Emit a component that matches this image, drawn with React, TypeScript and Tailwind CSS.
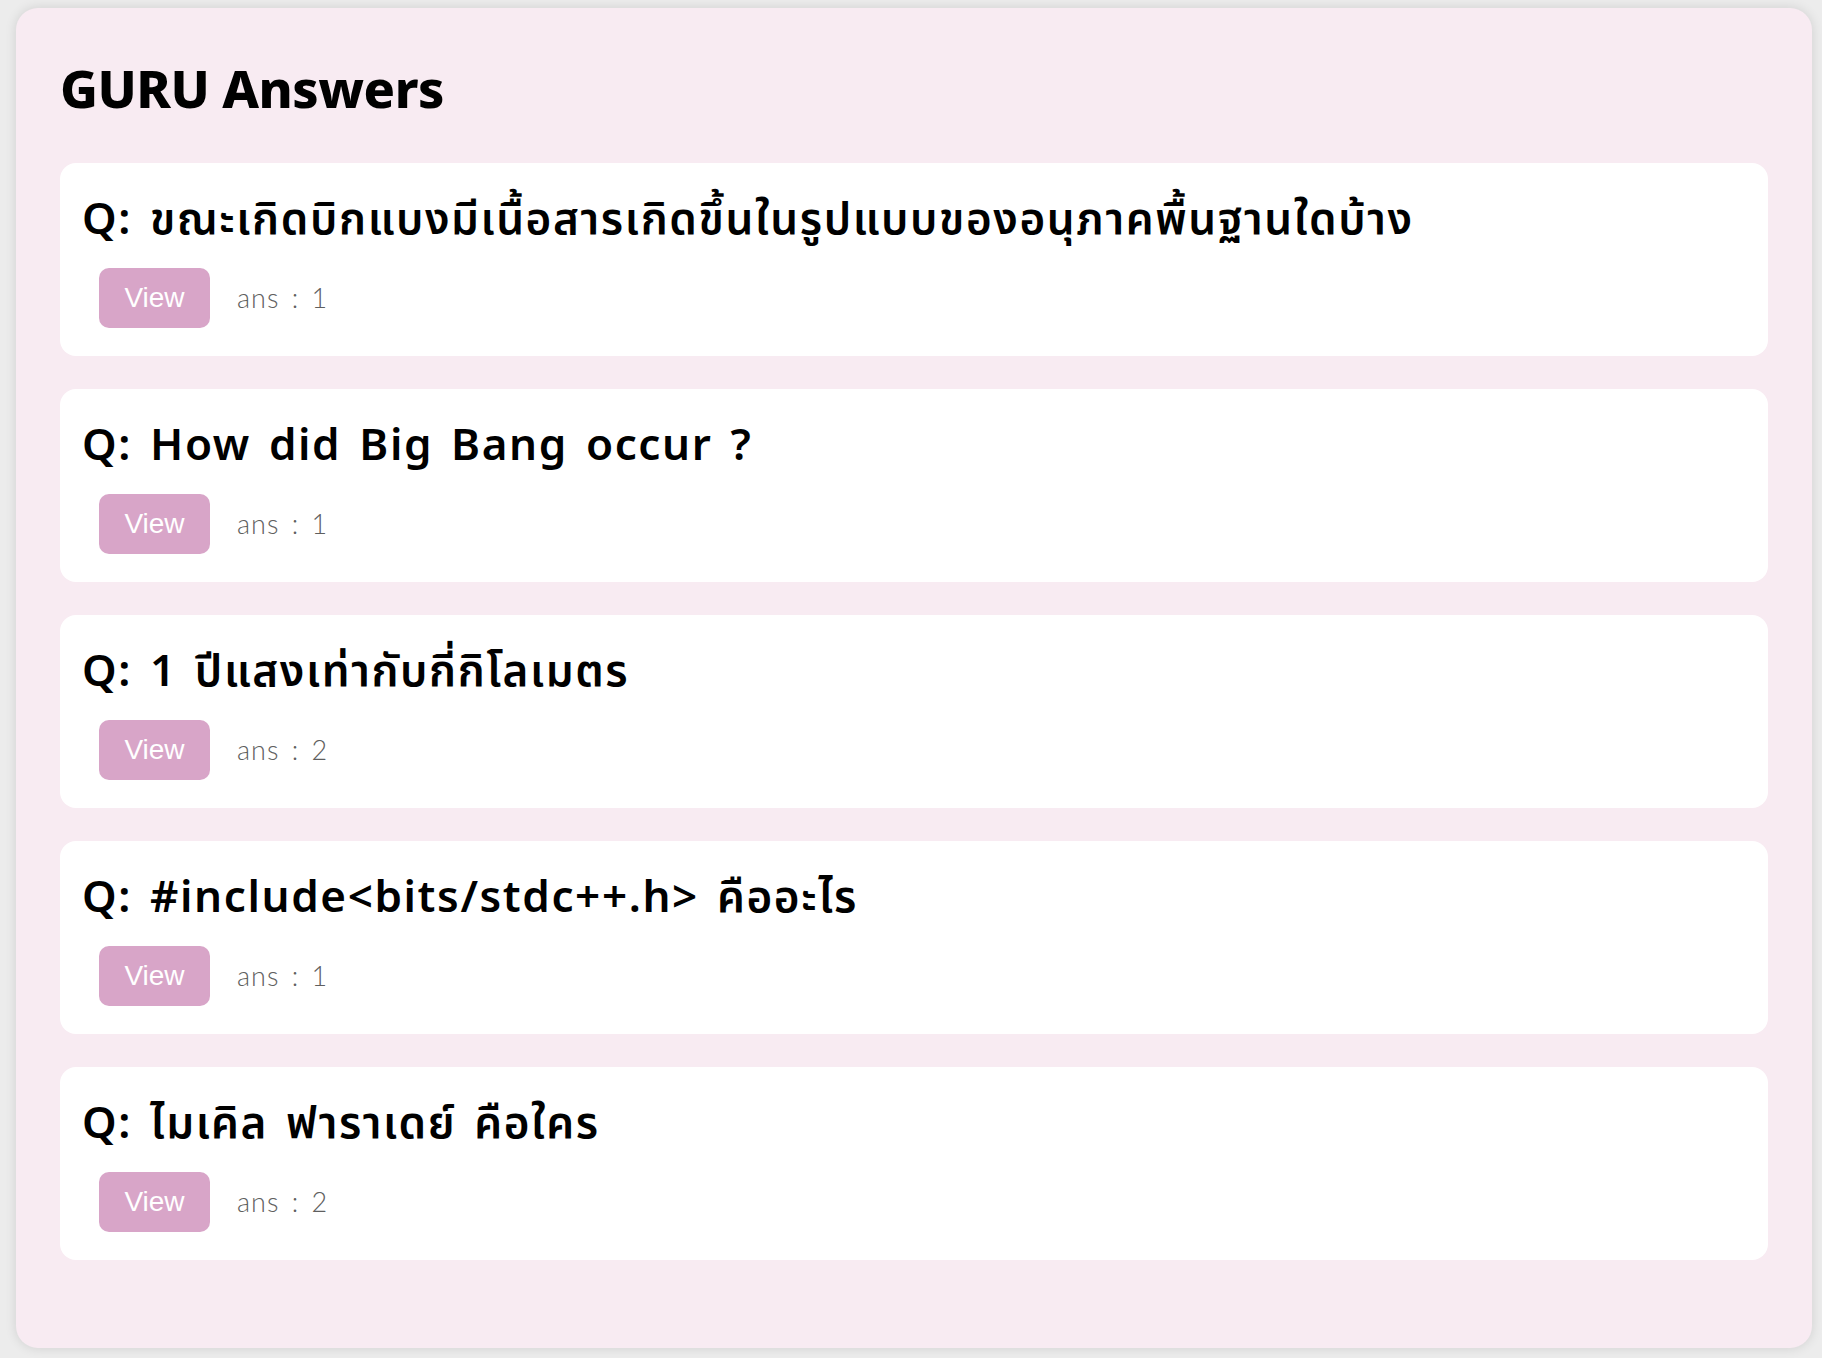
import React from "react";

const questions = [
  { q: "ขณะเกิดบิกแบงมีเนื้อสารเกิดขึ้นในรูปแบบของอนุภาคพื้นฐานใดบ้าง", ans: 1 },
  { q: "How did Big Bang occur ?", ans: 1 },
  { q: "1 ปีแสงเท่ากับกี่กิโลเมตร", ans: 2 },
  { q: "#include<bits/stdc++.h> คืออะไร", ans: 1 },
  { q: "ไมเคิล ฟาราเดย์ คือใคร", ans: 2 },
];

export default function App() {
  return (
    <div className="min-h-screen bg-[#ececec] pt-[8px] pl-[16px] pr-[10px] pb-[10px]">
      <div className="h-[1340px] rounded-[22px] bg-[#f8ebf2] px-[44px] pt-[54px] shadow-[0_0_12px_rgba(0,0,0,0.12)]">
        <h1 className="font-['Noto_Sans','Noto_Sans_Thai',sans-serif] text-[52px] font-extrabold leading-[52px] tracking-[-0.5px] text-black">
          GURU Answers
        </h1>
        <div className="mt-[49px] flex flex-col gap-[33px]">
          {questions.map((item, i) => (
            <div key={i} className="rounded-[16px] bg-white px-[22px] pb-[28px] pt-[28px]">
              <div className="font-['Noto_Sans','Noto_Sans_Thai',sans-serif] text-[44px] font-semibold leading-[52px] tracking-[1.6px] text-black [word-spacing:5px]">
                Q: {item.q}
              </div>
              <div className="mt-[25px] flex items-center">
                <button className="ml-[17px] flex h-[60px] w-[111px] items-center justify-center rounded-[10px] bg-[#d8a5c8] font-['Liberation_Sans',Arial,sans-serif] text-[28px] text-white">
                  View
                </button>
                <span className="ml-[27px] font-['Lato','Noto_Sans',sans-serif] text-[27px] font-light tracking-[1px] text-[#5f5f5f] [word-spacing:4px]">
                  ans : {item.ans}
                </span>
              </div>
            </div>
          ))}
        </div>
      </div>
    </div>
  );
}
